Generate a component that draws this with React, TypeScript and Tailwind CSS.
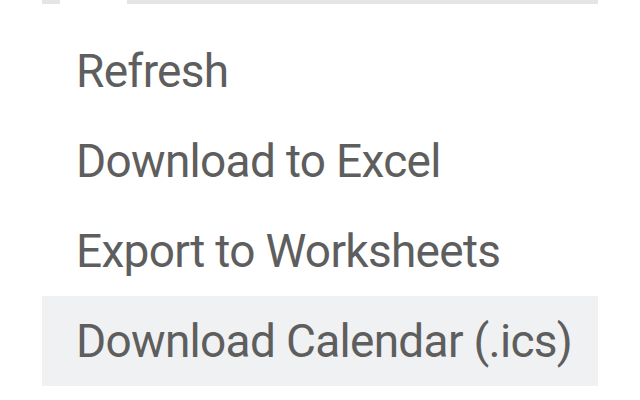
const items = [
  "Refresh",
  "Download to Excel",
  "Export to Worksheets",
  "Download Calendar (.ics)",
];

export default function App() {
  return (
    <div className="w-[640px] h-[400px] bg-white overflow-hidden font-['Roboto',sans-serif]">
      <div className="flex h-[4px] pl-[42px]">
        <div className="w-[18px] bg-[#e4e5e7]" />
        <div className="w-[67px]" />
        <div className="w-[471px] bg-[#e4e5e7]" />
      </div>
      <ul className="ml-[42px] w-[556px] pt-[22px]">
        {items.map((label, idx) => (
          <li
            key={label}
            className={`h-[90px] flex items-center pl-[34px] text-[46px] tracking-[-0.7px] text-[#5e5e5e] ${
              idx === items.length - 1 ? "bg-[#f0f1f3]" : ""
            }`}
          >
            {label}
          </li>
        ))}
      </ul>
    </div>
  );
}
